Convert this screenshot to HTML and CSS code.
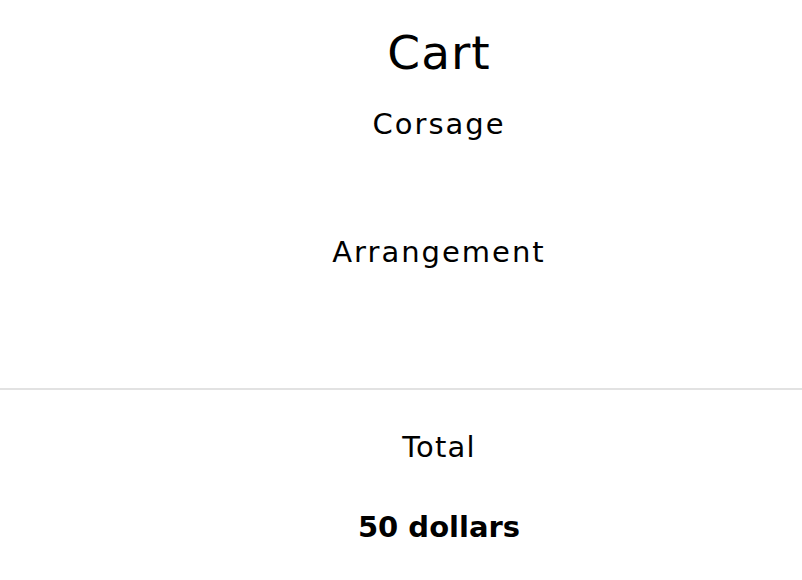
FILE: index.html
```html
<!DOCTYPE html>
<html>
<head>
<meta charset="utf-8">
<link rel="stylesheet" href="styles.css">
</head>
<body>
<main class="cart">
  <section class="items">
    <h1 class="title">Cart</h1>
    <ul class="item-list">
      <li class="item">Corsage</li>
      <li class="item">Arrangement</li>
    </ul>
  </section>
  <hr class="divider">
  <section class="summary">
    <p class="total-label">Total</p>
    <p class="total-value">50 dollars</p>
  </section>
</main>
</body>
</html>
```
FILE: styles.css
```css
html, body {
  margin: 0;
  padding: 0;
  background: #ffffff;
}
body {
  font-family: "DejaVu Sans", "Open Sans", sans-serif;
  color: #000;
}
.cart {
  display: flex;
  flex-direction: column;
  padding-top: 25px;
}
.items, .summary {
  display: flex;
  flex-direction: column;
  align-items: center;
  padding-left: 76px;
}
.title {
  margin: 0;
  font-size: 47px;
  font-weight: 400;
  line-height: 56px;
  letter-spacing: 1px;
}
.item-list {
  list-style: none;
  margin: 23px 0 0;
  padding: 0;
  display: flex;
  flex-direction: column;
  align-items: center;
  gap: 88px;
}
.item {
  font-size: 29px;
  line-height: 40px;
  letter-spacing: 2px;
}
.divider {
  margin: 116px 0 0;
  border: 0;
  height: 2px;
  background: #e2e2e2;
}
.summary {
  padding-top: 37px;
  gap: 40px;
}
.total-label, .total-value {
  margin: 0;
  font-size: 29px;
  line-height: 40px;
}
.total-label {
  letter-spacing: 1.2px;
}
.total-value {
  font-weight: 700;
}
```
